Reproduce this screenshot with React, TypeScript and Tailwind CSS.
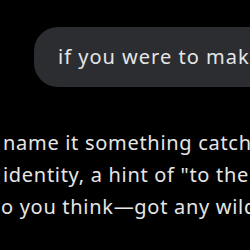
const font = { fontFamily: '"Noto Sans", "Open Sans", sans-serif' };

const answerLines = [
  { text: 'name it something catchy', shift: 'pl-[3px]' },
  { text: 'identity, a hint of "to the', shift: 'pl-[3px]' },
  { text: 'do you think—got any wild ideas?', shift: '-ml-[12px]' },
];

function UserBubble() {
  return (
    <div className="flex pl-[34px] pt-[27px]">
      <div className="flex h-[60px] w-[320px] shrink-0 items-center rounded-3xl bg-[#2b2d31] pl-6">
        <p className="whitespace-nowrap text-[20px] tracking-[1px] text-[#e6e6e6]">if you were to make one</p>
      </div>
    </div>
  );
}

function Answer() {
  return (
    <div className="mt-[40px] flex flex-col">
      {answerLines.map((line) => (
        <p
          key={line.text}
          className={`whitespace-nowrap text-[20px] leading-[32px] tracking-[0.7px] text-[#e6e6e6] ${line.shift}`}
        >
          {line.text}
        </p>
      ))}
    </div>
  );
}

export default function App() {
  return (
    <div className="h-[250px] w-[250px] overflow-hidden bg-black" style={font}>
      <UserBubble />
      <Answer />
    </div>
  );
}
